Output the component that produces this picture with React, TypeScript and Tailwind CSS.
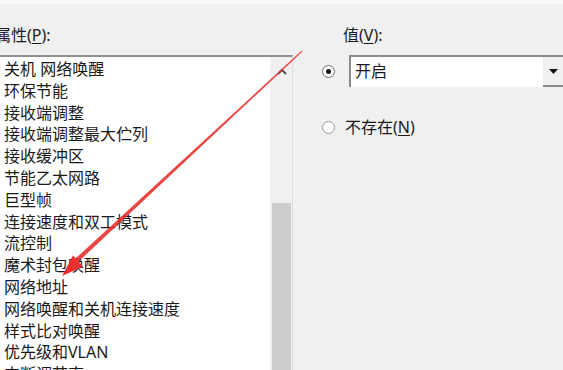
import React from "react";

const items = [
  "关机 网络唤醒",
  "环保节能",
  "接收端调整",
  "接收端调整最大伫列",
  "接收缓冲区",
  "节能乙太网路",
  "巨型帧",
  "连接速度和双工模式",
  "流控制",
  "魔术封包唤醒",
  "网络地址",
  "网络唤醒和关机连接速度",
  "样式比对唤醒",
  "优先级和VLAN",
  "中断调节率",
];

const font = { fontFamily: '"Noto Sans", "Noto Sans CJK SC", sans-serif' };

export default function App() {
  return (
    <div
      className="relative w-[563px] h-[370px] overflow-hidden bg-[#f0f0f0] text-[#1a1a1a] flex"
      style={font}
    >
      <div className="absolute left-0 top-0 w-full h-[4px] bg-[#f8f8f8]" />
      {/* Left column */}
      <div className="w-[293px] flex flex-col pt-[24px] shrink-0">
        <div className="-ml-[5px] h-[22px] text-[16px] leading-[22px]">
          属性(<span className="underline underline-offset-2">P</span>):
        </div>
        <div className="mt-[9px] flex-1 flex border-t-2 border-[#8f8f8f] border-r border-r-[#dcdcdc]">
          <div className="w-[270px] bg-white pt-[2px] pl-[4px] overflow-hidden">
            {items.map((t) => (
              <div key={t} className="h-[21.8px] text-[16px] leading-[21.8px] whitespace-nowrap">
                {t}
              </div>
            ))}
          </div>
          <div className="w-[22px] bg-[#f0f0f0] flex flex-col border-l border-[#f6f6f6]">
            <div className="h-[26px] flex items-center justify-center pt-[2px]">
              <svg width="10" height="7" viewBox="0 0 10 7">
                <path d="M1 6 L5 2 L9 6" stroke="#555" strokeWidth="2" fill="none" />
              </svg>
            </div>
            <div className="h-[120px]" />
            <div className="flex-1 mx-[1px] bg-[#cdcdcd]" />
          </div>
        </div>
      </div>

      {/* Right column */}
      <div className="flex-1 flex flex-col pt-[24px]">
        <div className="ml-[50px] h-[22px] text-[16px] leading-[22px]">
          值(<span className="underline underline-offset-2">V</span>):
        </div>
        <div className="mt-[9px] flex items-center">
          <div className="ml-[29px] w-[13px] h-[13px] rounded-full border border-[#6e6e6e] bg-white flex items-center justify-center">
            <div className="w-[5px] h-[5px] rounded-full bg-[#1a1a1a]" />
          </div>
          <div className="ml-[14px] flex-1 h-[32px] flex bg-white border-t-2 border-l-2 border-[#8a8a8a]">
            <div className="flex-1 pl-[4px] text-[16px] leading-[28px]">开启</div>
            <div className="w-[20px] bg-[#f0f0f0] border-b-2 border-[#8a8a8a] flex items-center justify-center">
              <svg width="9" height="5" viewBox="0 0 9 5">
                <path d="M0 0 L9 0 L4.5 5 Z" fill="#111" />
              </svg>
            </div>
          </div>
        </div>
        <div className="mt-[29px] flex items-center">
          <div className="ml-[29px] w-[13px] h-[13px] rounded-full border border-[#9a9a9a] bg-white" />
          <div className="ml-[10px] text-[16px] leading-[22px]">
            不存在(<span className="underline underline-offset-2">N</span>)
          </div>
        </div>
      </div>

      {/* Red annotation arrow */}
      <svg className="absolute left-0 top-0 pointer-events-none" width="563" height="370">
        <polygon
          points="301.5,50.8 302.5,51.5 77,263 74,260"
          fill="#e8312f"
          opacity="0.9"
        />
        <polygon points="62,276 83,266.5 73,255.5" fill="#e8312f" />
      </svg>
    </div>
  );
}
